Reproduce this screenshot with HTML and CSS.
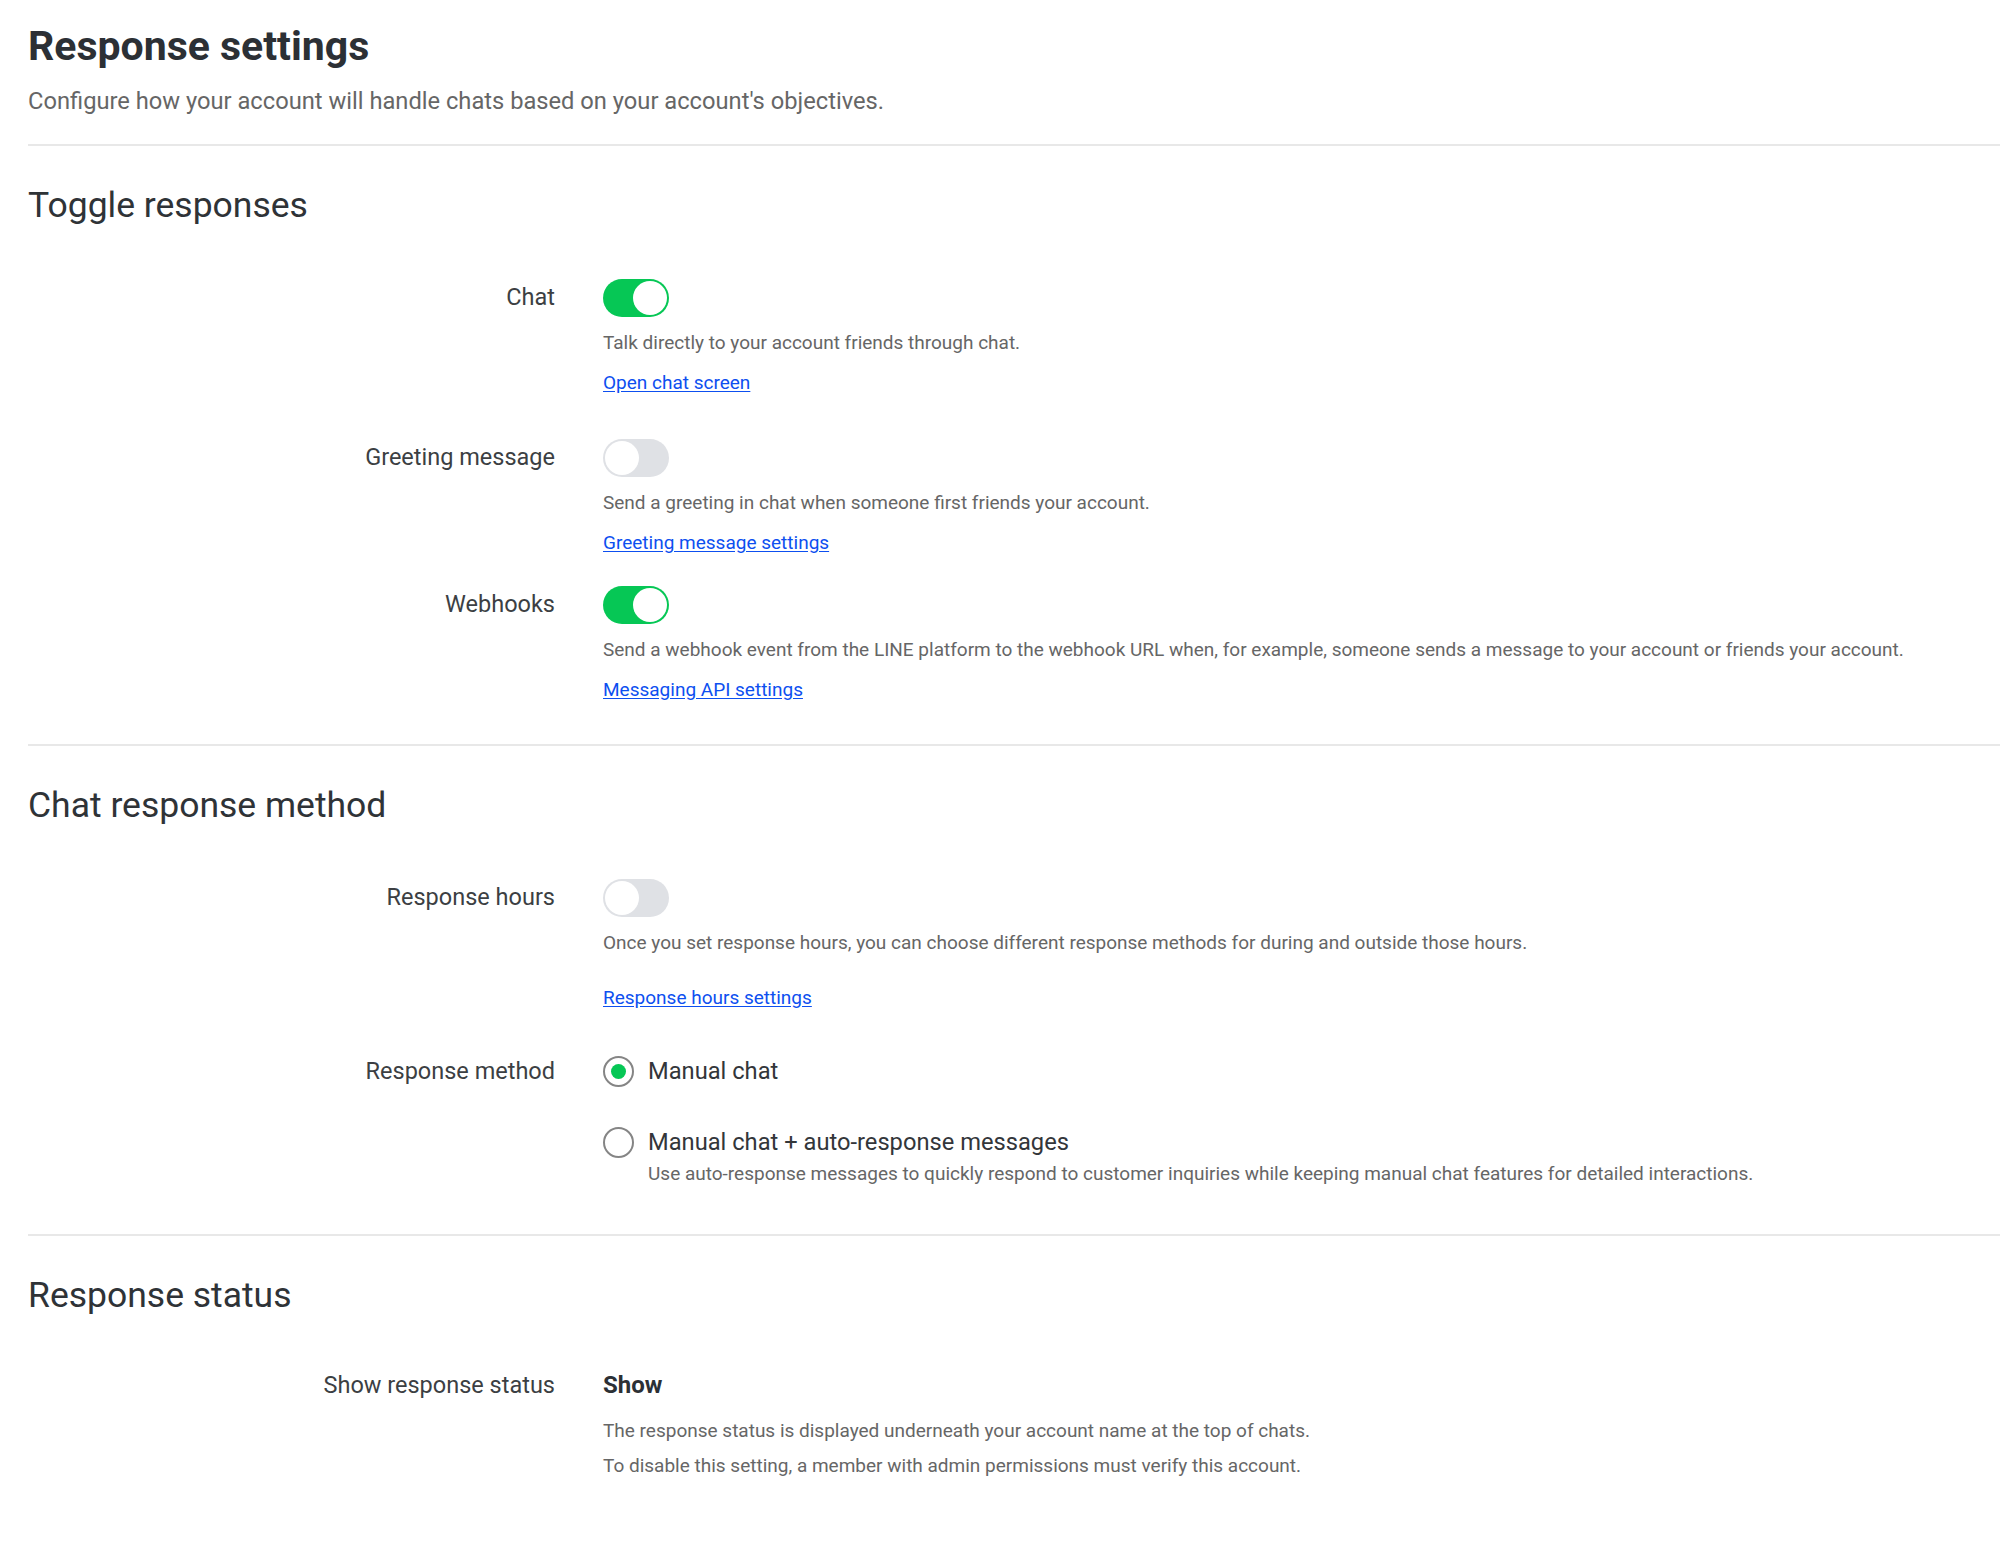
FILE: index.html
```html
<!DOCTYPE html>
<html lang="en">
<head>
<meta charset="utf-8">
<title>Response settings</title>
<link rel="stylesheet" href="styles.css">
</head>
<body>
<main class="page">
  <header class="page-head">
    <h1 class="title">Response settings</h1>
    <p class="subtitle">Configure how your account will handle chats based on your account's objectives.</p>
  </header>

  <section class="section section-toggle">
    <h2 class="section-title">Toggle responses</h2>
    <div class="row row-first">
      <div class="label">Chat</div>
      <div class="control">
        <span class="toggle on"><span class="knob"></span></span>
        <p class="desc">Talk directly to your account friends through chat.</p>
        <a class="link" href="#">Open chat screen</a>
      </div>
    </div>
    <div class="row row-greeting">
      <div class="label">Greeting message</div>
      <div class="control">
        <span class="toggle"><span class="knob"></span></span>
        <p class="desc">Send a greeting in chat when someone first friends your account.</p>
        <a class="link" href="#">Greeting message settings</a>
      </div>
    </div>
    <div class="row row-webhooks">
      <div class="label">Webhooks</div>
      <div class="control">
        <span class="toggle on"><span class="knob"></span></span>
        <p class="desc">Send a webhook event from the LINE platform to the webhook URL when, for example, someone sends a message to your account or friends your account.</p>
        <a class="link" href="#">Messaging API settings</a>
      </div>
    </div>
  </section>

  <section class="section section-method">
    <h2 class="section-title">Chat response method</h2>
    <div class="row row-first">
      <div class="label">Response hours</div>
      <div class="control">
        <span class="toggle"><span class="knob"></span></span>
        <p class="desc">Once you set response hours, you can choose different response methods for during and outside those hours.</p>
        <a class="link link-spaced" href="#">Response hours settings</a>
      </div>
    </div>
    <div class="row row-method">
      <div class="label">Response method</div>
      <div class="control">
        <div class="option">
          <span class="radio checked"><span class="dot"></span></span>
          <span class="option-text">Manual chat</span>
        </div>
        <div class="option option-second">
          <span class="radio"></span>
          <span class="option-text">Manual chat + auto-response messages</span>
        </div>
        <p class="option-desc">Use auto-response messages to quickly respond to customer inquiries while keeping manual chat features for detailed interactions.</p>
      </div>
    </div>
  </section>

  <section class="section section-status">
    <h2 class="section-title">Response status</h2>
    <div class="row row-status">
      <div class="label">Show response status</div>
      <div class="control">
        <div class="value">Show</div>
        <p class="desc desc-status1">The response status is displayed underneath your account name at the top of chats.</p>
        <p class="desc desc-status2">To disable this setting, a member with admin permissions must verify this account.</p>
      </div>
    </div>
  </section>
</main>
</body>
</html>
```

FILE: styles.css
```css
html, body {
  margin: 0;
  padding: 0;
  background: #ffffff;
}

body {
  font-family: Roboto, "Liberation Sans", Arial, sans-serif;
  color: #3a3d41;
  width: 2000px;
  overflow: hidden;
}

.page {
  padding: 22px 0 0 28px;
}

.page-head {
  padding-bottom: 27px;
  border-bottom: 2px solid #e8e8e8;
}

.title {
  margin: 0;
  font-size: 41px;
  line-height: 48px;
  font-weight: 700;
  color: #2c3035;
}

.subtitle {
  margin: 15px 0 0;
  font-size: 23.7px;
  line-height: 32px;
  color: #666666;
}

.section {
  padding-top: 37px;
  border-bottom: 2px solid #e8e8e8;
}

.section-toggle {
  padding-bottom: 40px;
}

.section-method {
  padding-bottom: 46px;
}

.section-status {
  border-bottom: none;
  padding-bottom: 60px;
}

.section-title {
  margin: 0;
  font-size: 35.5px;
  line-height: 44px;
  font-weight: 400;
  color: #2f3337;
}

.row {
  display: grid;
  grid-template-columns: 527px 1fr;
  column-gap: 48px;
  align-items: start;
}

.row-first {
  margin-top: 52px;
}

.row-greeting {
  margin-top: 42px;
}

.row-webhooks {
  margin-top: 29px;
}

.row-method {
  margin-top: 41px;
}

.row-status {
  margin-top: 50px;
}

.label {
  text-align: right;
  font-size: 23.5px;
  line-height: 36px;
  color: #3c3f43;
}

.control {
  display: flex;
  flex-direction: column;
  align-items: flex-start;
}

.toggle {
  position: relative;
  display: block;
  width: 66px;
  height: 38px;
  border-radius: 19px;
  background: #dfe1e5;
  box-sizing: border-box;
}

.toggle.on {
  background: #06c755;
}

.knob {
  position: absolute;
  top: 2px;
  left: 2px;
  width: 34px;
  height: 34px;
  border-radius: 50%;
  background: #ffffff;
}

.toggle.on .knob {
  left: 30px;
}

.desc {
  margin: 12px 0 0;
  font-size: 19px;
  line-height: 28px;
  color: #666666;
}

.link {
  margin-top: 12px;
  font-size: 19px;
  line-height: 28px;
  color: #0d4ff0;
  text-decoration: underline;
  text-underline-offset: 2px;
}

.link-spaced {
  margin-top: 27px;
}

.option {
  display: flex;
  align-items: center;
  gap: 14px;
  height: 36px;
}

.option-second {
  margin-top: 35px;
}

.radio {
  position: relative;
  flex: none;
  width: 31px;
  height: 31px;
  border-radius: 50%;
  border: 2px solid #858585;
  box-sizing: border-box;
  background: #ffffff;
}

.dot {
  position: absolute;
  top: 50%;
  left: 50%;
  width: 15px;
  height: 15px;
  margin: -7.5px 0 0 -7.5px;
  border-radius: 50%;
  background: #06c755;
}

.option-text {
  font-size: 23.7px;
  line-height: 36px;
  color: #33363a;
}

.option-desc {
  margin: 0 0 0 45px;
  font-size: 19px;
  line-height: 28px;
  color: #666666;
}

.value {
  font-size: 24px;
  line-height: 36px;
  font-weight: 700;
  color: #2c3035;
}

.desc-status1 {
  margin-top: 14px;
}

.desc-status2 {
  margin-top: 7px;
}
```
